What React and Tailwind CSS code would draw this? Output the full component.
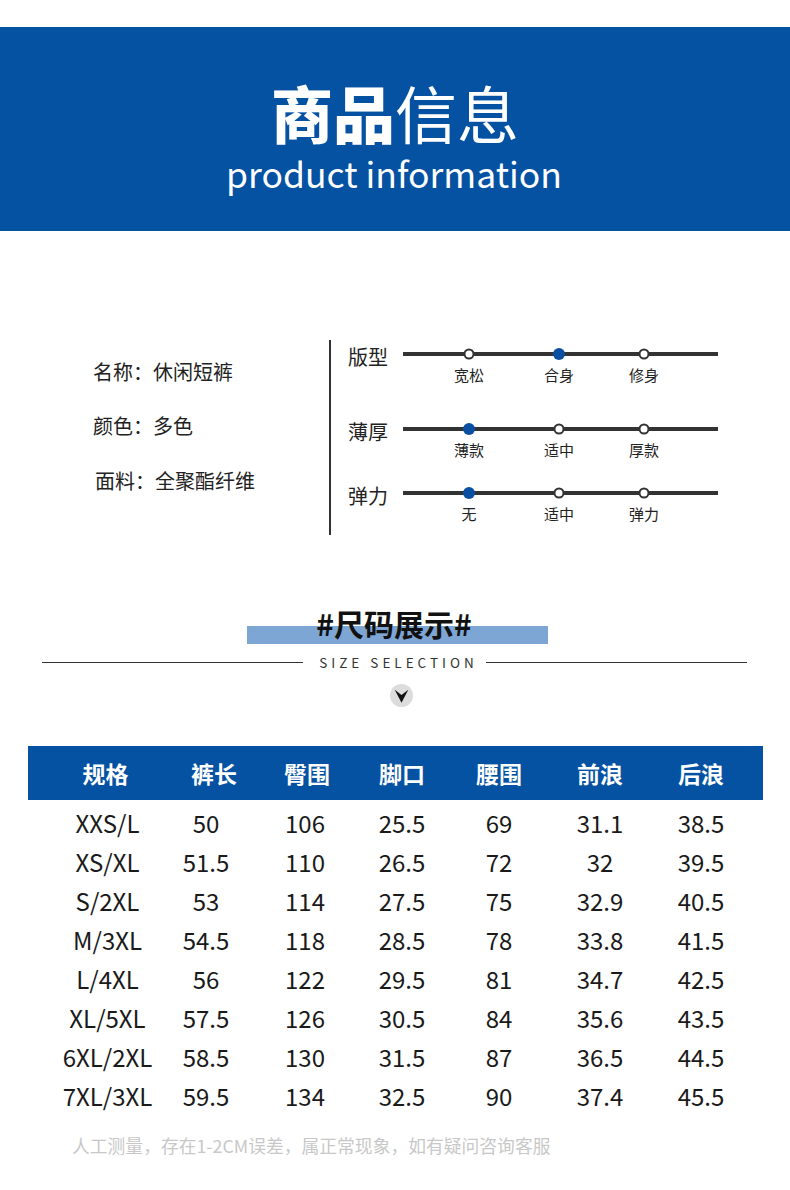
import React from "react";

const sliders = [
  { label: "版型", opts: ["宽松", "合身", "修身"], active: 1, mt: "mt-[7px]" },
  { label: "薄厚", opts: ["薄款", "适中", "厚款"], active: 0, mt: "mt-[55px]" },
  { label: "弹力", opts: ["无", "适中", "弹力"], active: 0, mt: "mt-[44px]" },
];
const posCls = ["left-[66px]", "left-[156px]", "left-[241px]"];

const headers = ["规格", "裤长", "臀围", "脚口", "腰围", "前浪", "后浪"];
const headerCellCls = ["pr-[4px]", "pl-[16px]", "pl-[4px]", "", "pl-[0px]", "", ""];
const rows = [
  ["XXS/L", "50", "106", "25.5", "69", "31.1", "38.5"],
  ["XS/XL", "51.5", "110", "26.5", "72", "32", "39.5"],
  ["S/2XL", "53", "114", "27.5", "75", "32.9", "40.5"],
  ["M/3XL", "54.5", "118", "28.5", "78", "33.8", "41.5"],
  ["L/4XL", "56", "122", "29.5", "81", "34.7", "42.5"],
  ["XL/5XL", "57.5", "126", "30.5", "84", "35.6", "43.5"],
  ["6XL/2XL", "58.5", "130", "31.5", "87", "36.5", "44.5"],
  ["7XL/3XL", "59.5", "134", "32.5", "90", "37.4", "45.5"],
];

function Slider({ s }) {
  return (
    <div className={`flex items-start ${s.mt}`}>
      <div className="text-[20px] leading-[20px] text-[#222] w-[40px] whitespace-nowrap">{s.label}</div>
      <div className="relative ml-[15px] mt-[5px] w-[315px] h-[4px] bg-[#333]">
        {s.opts.map((o, i) => (
          <React.Fragment key={i}>
            {i === s.active ? (
              <div className={`absolute ${posCls[i]} top-1/2 -translate-x-1/2 -translate-y-1/2 w-[12px] h-[12px] rounded-full bg-[#0b4fa3]`} />
            ) : (
              <div className={`absolute ${posCls[i]} top-1/2 -translate-x-1/2 -translate-y-1/2 w-[11px] h-[11px] rounded-full bg-white border-2 border-[#333]`} />
            )}
            <div className={`absolute ${posCls[i]} top-[15px] -translate-x-1/2 text-[15px] leading-[16px] text-[#222] whitespace-nowrap`}>
              {o}
            </div>
          </React.Fragment>
        ))}
      </div>
    </div>
  );
}

export default function App() {
  return (
    <div className="w-[790px] min-h-[1190px] bg-white font-['Noto_Sans_CJK_SC','Noto_Sans',sans-serif]">
      <div className="h-[27px]" />
      <div className="h-[204px] bg-[#0552a3] flex flex-col items-center text-white">
        <div className="mt-[54px] flex text-[62px] leading-[62px] whitespace-nowrap">
          <span className="font-black">商品</span>
          <span className="font-normal">信息</span>
        </div>
        <div className="mt-[12px] ml-[-2px] text-[35.5px] leading-[36px] font-normal whitespace-nowrap">product information</div>
      </div>

      <div className="mt-[109px] flex h-[195px]">
        <div className="w-[329px] pl-[93px] text-[20px] leading-[20px] text-[#222]">
          <div className="mt-[22px]">名称：休闲短裤</div>
          <div className="mt-[34px]">颜色：多色</div>
          <div className="mt-[35px] ml-[2px]">面料：全聚酯纤维</div>
        </div>
        <div className="w-[2px] h-full bg-[#333]" />
        <div className="ml-[17px] flex flex-col">
          {sliders.map((s, i) => (
            <Slider key={i} s={s} />
          ))}
        </div>
      </div>

      <div className="mt-[73px] flex flex-col items-center">
        <div className="relative z-10 ml-[-2px] text-[30px] leading-[30px] font-bold text-[#111] whitespace-nowrap">#尺码展示#</div>
        <div className="mt-[-12px] w-[301px] h-[18px] bg-[#7ea6d5] ml-[4px]" />
      </div>

      <div className="mt-[11px] h-[14px] flex items-center pl-[42px] pr-[43px]">
        <div className="flex-1 h-px bg-[#333]" />
        <div className="ml-[16px] mr-[8px] text-[13.5px] leading-[14px] tracking-[4px] text-[#333] whitespace-nowrap">SIZE SELECTION</div>
        <div className="flex-1 h-px bg-[#333]" />
      </div>

      <div className="mt-[15px] flex justify-center">
        <svg width="23" height="23" viewBox="0 0 22 22" className="ml-[12px]">
          <circle cx="11" cy="11" r="11" fill="#dcdcdc" />
          <path d="M4.5 5.5 L11 10.5 L17.5 5.5 L11 18 Z" fill="#111" />
        </svg>
      </div>

      <div className="mt-[39px] ml-[28px] w-[735px]">
        <div className="h-[54px] bg-[#0552a3] pl-[31px] grid grid-cols-[97px_100px_98px_96px_98px_104px_98px] items-center">
          {headers.map((h, i) => (
            <div key={i} className={`text-center text-white font-bold text-[23px] leading-[23px] whitespace-nowrap ${headerCellCls[i]}`}>
              {h}
            </div>
          ))}
        </div>
        <div className="pt-[3px] pl-[31px]">
          {rows.map((r, ri) => (
            <div key={ri} className="h-[39px] grid grid-cols-[97px_100px_98px_96px_98px_104px_98px] items-center">
              {r.map((c, ci) => (
                <div key={ci} className="text-center text-[24px] leading-[24px] text-[#1a1a1a] whitespace-nowrap">
                  {c}
                </div>
              ))}
            </div>
          ))}
        </div>
      </div>

      <div className="mt-[21px] pl-[72px] text-[17.8px] leading-[18px] text-[#c8c8c8] whitespace-nowrap">
        人工测量，存在1-2CM误差，属正常现象，如有疑问咨询客服
      </div>
    </div>
  );
}
